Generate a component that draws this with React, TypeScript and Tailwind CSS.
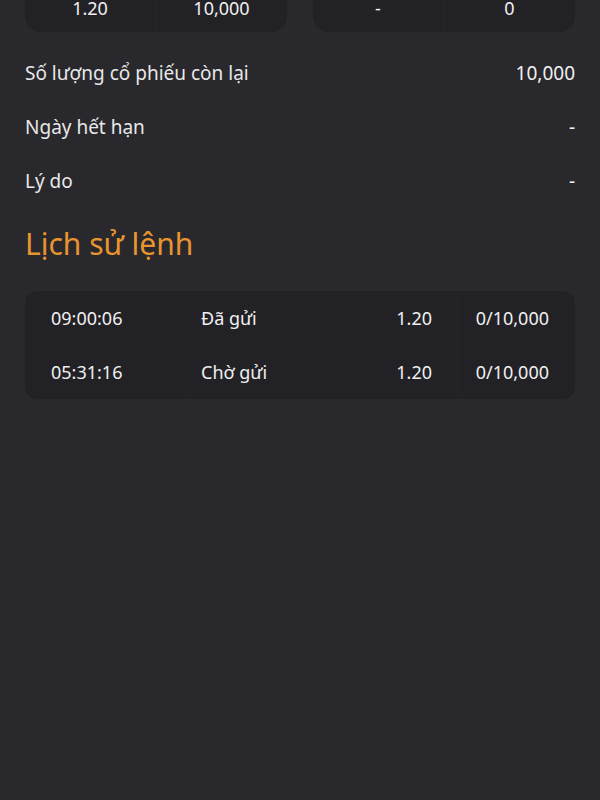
const summary = [
  { cells: ['1.20', '10,000'] },
  { cells: ['-', '0'] },
];

const info = [
  { label: 'Số lượng cổ phiếu còn lại', value: '10,000' },
  { label: 'Ngày hết hạn', value: '-' },
  { label: 'Lý do', value: '-' },
];

const history = [
  { time: '09:00:06', status: 'Đã gửi', price: '1.20', qty: '0/10,000' },
  { time: '05:31:16', status: 'Chờ gửi', price: '1.20', qty: '0/10,000' },
];

export default function App() {
  return (
    <div
      className="h-[800px] w-[600px] overflow-hidden bg-[#29282d] px-[25px] text-[#f0f0f0]"
      style={{ fontFamily: '"Noto Sans", "Open Sans", sans-serif' }}
    >
      {/* summary cards (scrolled past their top) */}
      <div className="-mt-[17px] grid grid-cols-2 gap-[26px]">
        {summary.map((card, i) => (
          <div key={i} className="grid grid-cols-2 overflow-hidden rounded-2xl bg-[#222126]">
            {card.cells.map((c, j) => (
              <div
                key={j}
                className={`flex h-[49px] items-center justify-center text-[18px] leading-[16px] ${
                  j === 0 ? 'border-r border-[#27262b]' : ''
                }`}
              >
                {c}
              </div>
            ))}
          </div>
        ))}
      </div>

      {/* detail rows */}
      <div className="mt-[14px]">
        {info.map((row) => (
          <div key={row.label} className="flex h-[54px] items-center justify-between text-[19px]">
            <span className="text-[#e8e8e8]">{row.label}</span>
            <span>{row.value}</span>
          </div>
        ))}
      </div>

      <h2 className="mt-[16px] text-[30px] leading-[40px] text-[#e8952f]">Lịch sử lệnh</h2>

      <div className="mt-[27px] grid grid-cols-[165px_140px_128px_1fr] overflow-hidden rounded-xl bg-[#222126] text-[18px]">
        <div className="border-r border-[#25242a]">
          {history.map((h) => (
            <div key={h.time} className="flex h-[54px] items-center pl-[26px]">{h.time}</div>
          ))}
        </div>
        <div>
          {history.map((h) => (
            <div key={h.time} className="flex h-[54px] items-center pl-[11px]">{h.status}</div>
          ))}
        </div>
        <div className="border-r border-[#25242a]">
          {history.map((h) => (
            <div key={h.time} className="flex h-[54px] items-center justify-end pr-[25px]">{h.price}</div>
          ))}
        </div>
        <div>
          {history.map((h) => (
            <div key={h.time} className="flex h-[54px] items-center justify-end pr-[26px]">{h.qty}</div>
          ))}
        </div>
      </div>
    </div>
  );
}
